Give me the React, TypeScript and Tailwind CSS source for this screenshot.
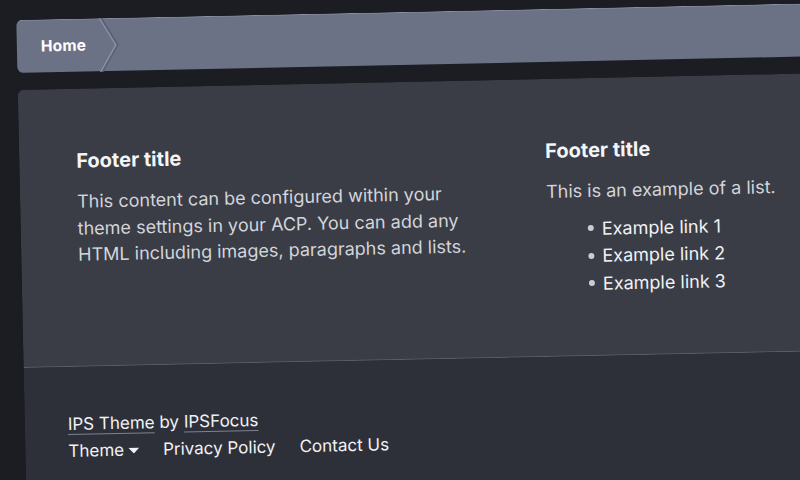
import React from "react";

export default function App() {
  return (
    <div className="relative w-[800px] h-[480px] overflow-hidden bg-[#1b1d22]" style={{ fontFamily: "Inter, 'Noto Sans', sans-serif" }}>
      <div className="w-[900px] pt-[12px] pl-[21px] origin-[400px_240px] -rotate-[1.2deg]">
        {/* Breadcrumb */}
        <div className="flex items-stretch h-[53px] rounded-l-[6px] bg-[#6b7285] border-t border-[#8a90a1]">
          <div className="relative flex items-center pl-[24px] pr-[34px]">
            <span className="text-[15.5px] font-bold text-white tracking-[0.2px]">Home</span>
            <svg className="absolute right-0 top-[-1px]" width="22" height="54" viewBox="0 0 22 54">
              <polyline points="4,0 20,27 4,54" fill="none" stroke="#5b6173" strokeWidth="1.6" />
              <polyline points="2,0 18,27 2,54" fill="none" stroke="#8e94a5" strokeWidth="1.2" />
            </svg>
          </div>
        </div>

        {/* Panel */}
        <div className="mt-[17px] rounded-tl-[6px] overflow-hidden">
          <div className="flex h-[278px] bg-[#3a3d46] pl-[57px] pt-[58px] border-b border-[#5c5f69]">
            <div className="w-[469px]">
              <h3 className="text-[20px] leading-[28px] font-bold text-[#f4f5f7]">Footer title</h3>
              <p className="mt-[14px] text-[18px] leading-[26.5px] text-[#d3d5db] w-[400px]">
                This content can be configured within your theme settings in your ACP. You can add any HTML including images, paragraphs and lists.
              </p>
            </div>
            <div>
              <h3 className="text-[20px] leading-[28px] font-bold text-[#f4f5f7]">Footer title</h3>
              <p className="mt-[14px] text-[18px] leading-[26.5px] text-[#d3d5db]">This is an example of a list.</p>
              <ul className="mt-[10px] flex flex-col">
                {["Example link 1", "Example link 2", "Example link 3"].map((t) => (
                  <li key={t} className="flex items-center h-[27.5px] text-[18px] text-[#f1f2f5]">
                    <span className="ml-[41px] mr-[8px] w-[6px] h-[6px] rounded-full bg-[#c9ccd4]" />
                    {t}
                  </li>
                ))}
              </ul>
            </div>
          </div>
          <div className="h-[200px] bg-[#2e3039] pl-[43px] pt-[44px]">
            <div className="text-[17px] leading-[27px] text-[#f1f2f5]">
              <span className="underline decoration-[#7d8290] decoration-1 underline-offset-[4px]">IPS Theme</span> by{" "}
              <span className="underline decoration-[#7d8290] decoration-1 underline-offset-[4px]">IPSFocus</span>
            </div>
            <div className="flex items-center gap-[24px] text-[17px] leading-[27px] text-[#f1f2f5]">
              <span className="flex items-center gap-[4px]">
                Theme
                <svg width="11" height="6" viewBox="0 0 11 6"><polygon points="0,0 11,0 5.5,6" fill="#f1f2f5" /></svg>
              </span>
              <span>Privacy Policy</span>
              <span>Contact Us</span>
            </div>
          </div>
        </div>
      </div>
    </div>
  );
}
